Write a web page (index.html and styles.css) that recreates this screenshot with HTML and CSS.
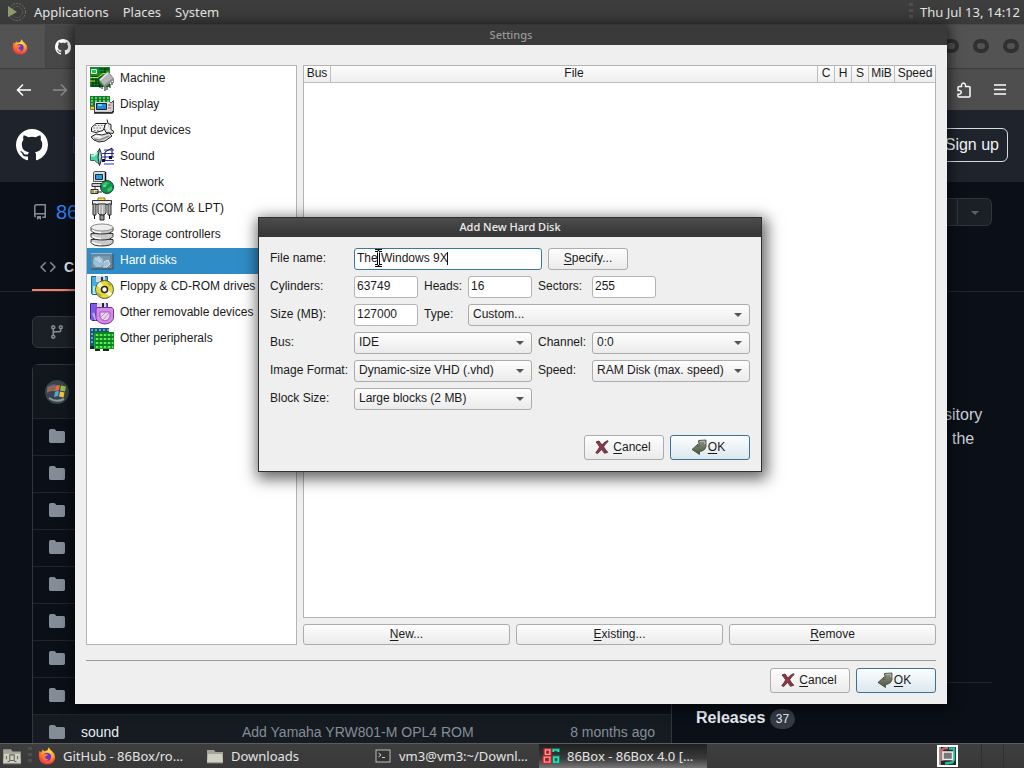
FILE: index.html
```html
<!DOCTYPE html>
<html lang="en">
<head>
<meta charset="utf-8">
<title>86Box Settings</title>
<link rel="stylesheet" href="styles.css">
</head>
<body>
<svg class="defs" aria-hidden="true">
  <defs>
    <linearGradient id="leaf" x1="0" y1="0" x2="0" y2="1"><stop offset="0" stop-color="#8f967e"/><stop offset="1" stop-color="#4d5543"/></linearGradient>
    <radialGradient id="flame" cx=".6" cy=".25" r=".85"><stop offset="0" stop-color="#ffe14a"/><stop offset=".45" stop-color="#ff9a2a"/><stop offset=".8" stop-color="#f4403c"/><stop offset="1" stop-color="#d8206c"/></radialGradient>
    <symbol id="firefox" viewBox="0 0 16 16">
      <path d="M1.200 3.400 2.800 4.600 4.200 2.200 5.600 3.800Q7 3 8.200 3L9.600.3Q11 3 13 4.300 15.600 6.500 15.200 9.800 14.100 15.500 8.200 15.600 1.700 15.200.8 9 .6 6 1.200 3.400z" fill="url(#flame)"/>
      <circle cx="8" cy="8.700" r="3.700" fill="#6a35c8"/>
      <path d="M4.200 6.500Q6 5.400 8 6.300 9.200 7 8.200 7.800 6.500 8 6.300 9.300 7 11.200 9.500 10.800 8 13 5.500 11.800 3.200 9.500 4.200 6.500z" fill="#ff7a2d"/>
    </symbol>
    <symbol id="octocat" viewBox="0 0 16 16"><path fill="#fff" d="M8 0C3.58 0 0 3.58 0 8c0 3.54 2.29 6.53 5.47 7.59.4.07.55-.17.55-.38 0-.19-.01-.82-.01-1.49-2.01.37-2.53-.49-2.69-.94-.09-.23-.48-.94-.82-1.13-.28-.15-.68-.52-.01-.53.63-.01 1.08.58 1.23.82.72 1.21 1.87.87 2.33.66.07-.52.28-.87.51-1.07-1.78-.2-3.64-.89-3.64-3.95 0-.87.31-1.59.82-2.15-.08-.2-.36-1.02.08-2.12 0 0 .67-.21 2.2.82.64-.18 1.32-.27 2-.27.68 0 1.36.09 2 .27 1.53-1.04 2.2-.82 2.2-.82.44 1.1.16 1.92.08 2.12.51.56.82 1.27.82 2.15 0 3.07-1.87 3.75-3.65 3.95.29.25.54.73.54 1.48 0 1.07-.01 1.93-.01 2.2 0 .21.15.46.55.38A8.013 8.013 0 0016 8c0-4.42-3.58-8-8-8z"/></symbol>
    <symbol id="folder" viewBox="0 0 16 16"><path fill="#848d97" d="M1.750 1A1.750 1.750 0 0 0 0 2.750v10.500C0 14.216.784 15 1.750 15h12.500A1.750 1.750 0 0 0 16 13.250v-8.500A1.750 1.750 0 0 0 14.250 3H7.500a.25.25 0 0 1-.2-.1l-.9-1.200C6.070 1.260 5.550 1 5 1H1.750Z"/></symbol>
    <symbol id="cross" viewBox="0 0 14 14"><path d="M1 2 4 1Q5.500 3 6.800 5 9 2.200 12.500.6L13 1.600Q10.300 4 8.600 6.800 10.500 10 12.800 12.300L9.500 13.300Q8 11.500 6.700 9.300 4.500 12 2.500 13.500L.8 12.700Q3 9.800 4.700 6.900 3 4.300 1 2z" fill="#8d3a48" stroke="#4c2028" stroke-width=".8"/></symbol>
    <symbol id="enter" viewBox="0 0 16 16"><path d="M7.500 1.500 15 1v6.500q-1 4.500-6.500 5V15.500L1 10.500 7 5v3q1-.5 1-2z" fill="url(#leaf)" stroke="#3e4437" stroke-width=".8"/><path d="M8.800 2.600 13.800 2.200v3" stroke="#b4b9a6" fill="none"/></symbol>
    <symbol id="dir" viewBox="0 0 18 18"><path d="M1 3h7l1.500 2H17v11H1z" fill="#a4a595"/><path d="M2 7h14l1 9H1z" fill="#cfd0c2"/><path d="M1 16h16" stroke="#77786b"/></symbol>
    <symbol id="box86" viewBox="0 0 16 16"><path d="M3 2.500h4v4H3zM2 9h5v4.500H2z" fill="none" stroke="#b52430" stroke-width="3.400"/><path d="M3 2.500h4v4H3zM2 9h5v4.500H2z" fill="none" stroke="#ff9b92" stroke-width="1.200"/><path d="M14.500 4.500v-2H10v2M10.500 9h4v4.500h-4z" fill="none" stroke="#0d7f63" stroke-width="3"/><path d="M14.500 4.500v-2H10v2M10.500 9h4v4.500h-4z" fill="none" stroke="#45e6b8" stroke-width="1.200"/></symbol>
  </defs>
</svg>

<div class="desktop">
  <header class="panel panel-top">
    <nav class="menus">
      <button class="menu-button"><svg class="launcher" viewBox="0 0 20 20"><circle cx="10" cy="10" r="8.500" fill="none" stroke="#6f775c" stroke-dasharray="2 1"/><circle cx="10" cy="10" r="5.500" fill="none" stroke="#59604c" stroke-dasharray="3 1"/><path d="M1 4l9 6-9 5z" fill="#8e9b6c"/></svg>Applications</button>
      <button class="menu-button">Places</button>
      <button class="menu-button">System</button>
    </nav>
    <div class="clock"><span class="grip"></span><time>Thu Jul 13, 14:12</time></div>
  </header>

  <main class="browser">
    <div class="tabstrip">
      <button class="pinned" aria-label="Firefox"><svg class="i16"><use href="#firefox"/></svg></button>
      <button class="tab" aria-label="GitHub"><svg class="i16"><use href="#octocat"/></svg></button>
      <div class="window-dots"><span></span><span></span><span></span></div>
    </div>
    <div class="toolbar">
      <div class="nav-buttons">
        <button aria-label="Back"><svg class="i16" viewBox="0 0 16 16"><path d="M15 8H1.500M7 2.500 1.500 8 7 13.500" fill="none" stroke="#fff" stroke-width="1.500"/></svg></button>
        <button aria-label="Forward"><svg class="i16" viewBox="0 0 16 16"><path d="M1 8h13.500M9 2.500 14.500 8 9 13.500" fill="none" stroke="#8d8d8d" stroke-width="1.500"/></svg></button>
      </div>
      <div class="tool-buttons">
        <button aria-label="Extensions"><svg class="i16" viewBox="0 0 16 16"><path d="M2 8.500V5.500Q2 4.500 3 4.500H5.500V3Q5.800 1 7.500 1T9.500 3V4.500H13q1 0 1 1V14q0 1-1 1H3q-1 0-1-1V12.200H3.500Q5.300 12 5.300 10.300T3.500 8.500z" fill="none" stroke="#fff" stroke-width="1.500"/></svg></button>
        <button aria-label="Menu"><svg class="i16" viewBox="0 0 16 16"><path d="M2 3h12M2 7.500h12M2 12h12" stroke="#fff" stroke-width="1.500"/></svg></button>
      </div>
    </div>
    <div class="gh-header">
      <a class="gh-logo" href="#" aria-label="GitHub"><svg class="i32"><use href="#octocat"/></svg></a>
      <span class="gh-search"></span>
      <a class="signup" href="#">Sign up</a>
    </div>
    <div class="repo">
      <div class="repo-head">
        <svg class="i16" viewBox="0 0 16 16"><path fill="#848d97" d="M2 2.500A2.500 2.500 0 0 1 4.500 0h8.750a.75.75 0 0 1 .75.75v12.500a.75.75 0 0 1-.75.75h-2.500a.75.75 0 0 1 0-1.500h1.750v-2h-8a1 1 0 0 0-.714 1.700.75.75 0 1 1-1.072 1.050A2.495 2.495 0 0 1 2 11.500Zm10.500-1h-8a1 1 0 0 0-1 1v6.708A2.486 2.486 0 0 1 4.500 9h8ZM5 12.250a.25.25 0 0 1 .25-.25h3.500a.25.25 0 0 1 .25.25v3.250a.25.25 0 0 1-.4.2l-1.450-1.087a.249.249 0 0 0-.3 0L5.400 15.700a.25.25 0 0 1-.4-.2Z"/></svg>
        <a class="owner" href="#">86</a>
        <button class="star" aria-label="Lists"><span class="tri"></span></button>
      </div>
      <nav class="repo-nav"><a class="repo-tab" href="#"><svg class="i16" viewBox="0 0 16 16"><path fill="#848d97" d="m11.280 3.220 4.250 4.250a.75.75 0 0 1 0 1.060l-4.250 4.250a.749.749 0 0 1-1.275-.326.749.749 0 0 1 .215-.734L13.940 8l-3.720-3.720a.749.749 0 0 1 .326-1.275.749.749 0 0 1 .734.215Zm-6.560 0a.751.751 0 0 1 1.042.018.751.751 0 0 1 .018 1.042L2.060 8l3.720 3.720a.749.749 0 0 1-.326 1.275.749.749 0 0 1-.734-.215L.47 8.530a.75.75 0 0 1 0-1.060Z"/></svg>C</a></nav>
      <div class="repo-body">
        <section class="code">
          <button class="branch" aria-label="Branch"><svg class="i16" viewBox="0 0 16 16"><path fill="#848d97" d="M9.500 3.250a2.250 2.250 0 1 1 3 2.122V6A2.500 2.500 0 0 1 10 8.500H6a1 1 0 0 0-1 1v1.128a2.251 2.251 0 1 1-1.500 0V5.372a2.250 2.250 0 1 1 1.500 0v1.836A2.493 2.493 0 0 1 6 7h4a1 1 0 0 0 1-1v-.628A2.250 2.250 0 0 1 9.500 3.250Zm-6 0a.75.75 0 1 0 1.500 0 .75.75 0 0 0-1.500 0Zm8.250-.75a.75.75 0 1 0 0 1.500.75.75 0 0 0 0-1.500ZM4.250 12a.75.75 0 1 0 0 1.500.75.75 0 0 0 0-1.500Z"/></svg></button>
          <div class="files">
            <div class="commit"><svg class="i24" viewBox="0 0 24 24"><circle cx="12" cy="12" r="12" fill="#39434b"/><path d="M2 7q7-5 12-1l-1 7Q8 9 2 13z" fill="#536879"/><path d="M3 8.500q4-2 8-1M2 11q5-2 8-1" stroke="#bd6141" stroke-width="1.500" fill="none"/><path d="m11 6 4-1-1 5-4 1z" fill="#f06a36"/><path d="m16 5.500 5 1-1 5-5-1z" fill="#8fc34a"/><path d="m10 12 4-1-1 5-4 1z" fill="#48a8e8"/><path d="m15 11.500 4.500 1-1 5-4.500-1z" fill="#f5c73a"/><path d="M4 18q7 5 15 1" stroke="#8b989e" stroke-width="2" fill="none"/></svg></div>
            <table class="file-table">
              <tbody>
              <tr><td><svg class="i16"><use href="#folder"/></svg></td><td></td><td></td><td></td></tr>
              <tr><td><svg class="i16"><use href="#folder"/></svg></td><td></td><td></td><td></td></tr>
              <tr><td><svg class="i16"><use href="#folder"/></svg></td><td></td><td></td><td></td></tr>
              <tr><td><svg class="i16"><use href="#folder"/></svg></td><td></td><td></td><td></td></tr>
              <tr><td><svg class="i16"><use href="#folder"/></svg></td><td></td><td></td><td></td></tr>
              <tr><td><svg class="i16"><use href="#folder"/></svg></td><td></td><td></td><td></td></tr>
              <tr><td><svg class="i16"><use href="#folder"/></svg></td><td></td><td></td><td></td></tr>
              <tr><td><svg class="i16"><use href="#folder"/></svg></td><td></td><td></td><td></td></tr>
              <tr class="hover"><td><svg class="i16"><use href="#folder"/></svg></td><td><a href="#">sound</a></td><td>Add Yamaha YRW801-M OPL4 ROM</td><td>8 months ago</td></tr>
              </tbody>
            </table>
          </div>
        </section>
        <aside class="about">
          <p class="description"><span>sitory</span><span class="indent">the</span></p>
          <h2 class="releases">Releases <span class="count">37</span></h2>
        </aside>
      </div>
    </div>
  </main>

  <footer class="panel panel-bottom">
    <button class="show-files" aria-label="Files"><svg class="i20" viewBox="0 0 18 18"><use href="#dir"/><path d="M7 8h4v5H7zM4 9v3M14 9v3M5 14h2M11 14h2" fill="none" stroke="#66685c"/></svg></button>
    <span class="grip"></span>
    <div class="tasks">
      <button class="task"><svg class="i18"><use href="#firefox"/></svg><span>GitHub - 86Box/ro…</span></button>
      <button class="task"><svg class="i18"><use href="#dir"/></svg><span>Downloads</span></button>
      <button class="task"><svg class="i18" viewBox="0 0 18 18"><rect x="2" y="3" width="14" height="12" fill="#343434" stroke="#bcbcbc"/><path d="m4.500 6 2.500 2-2.500 2M8 10.500h3" fill="none" stroke="#d2d2d2"/></svg><span>vm3@vm3:~/Downl…</span></button>
      <button class="task active"><svg class="i18"><use href="#box86"/></svg><span>86Box - 86Box 4.0 […</span></button>
    </div>
    <div class="tray"><svg class="tray-icon" viewBox="0 0 21 22"><path d="M1 1h19v20H1z" fill="#26282c" stroke="#fff" stroke-width="2"/><path d="M3 2v18" stroke="#fff"/><path d="M5 16V5q1-2 6-2" fill="none" stroke="#c9626a" stroke-width="2.500"/><path d="M12 3.500h5v11l-2 3-7 1" fill="none" stroke="#24bc98" stroke-width="2.500"/><path d="M6 7h9.500v7.500H6z" fill="#777" stroke="#eee" stroke-width="1.500"/></svg></div>
    <span class="workspace"></span>
  </footer>

  <section class="window settings" aria-label="Settings">
    <h1 class="titlebar inactive">Settings</h1>
    <div class="settings-content">
      <div class="panes">
        <ul class="categories">
          <li><button><svg class="i24" viewBox="0 0 24 24"><path d="M0 0h20v20H0z" fill="#128a2c"/><path d="M1 10h12M1 13h9M1 16h8M1 19h9M3 9v11M6 9v11M9 9v11M9 2h10M10 5h5M15 1v5" stroke="#05300d" fill="none"/><path d="M1.500 2.500h5v4h-5z" fill="#39b552" stroke="#d9f4dc"/><path d="M0 10.500h8l5-4h7M0 14h5" stroke="#d9de2a" fill="none"/><path d="M10 17v4M12 18v4M15 20v4M17 19v4M20 17v4M22 15v3M24 13v3" stroke="#111"/><path d="M18 4.500 24 12l-9 8-6-7z" fill="#b4b4b4" stroke="#777" stroke-width=".7"/><path d="m10 13 8-7" stroke="#e8e8e8" stroke-width="1.500"/><path d="m14 19 9-7" stroke="#888" stroke-width="1.500"/></svg>Machine</button></li>
          <li><button><svg class="i24" viewBox="0 0 24 24"><path d="M0 3h20v12H0z" fill="#137b2c"/><path d="M1 5h19M1 8h19M1 11h5" stroke="#7fe47f" stroke-width="1.500" stroke-dasharray="2 2"/><path d="M.5 13.500h4v3h-4z" stroke="#837b1e" fill="#d9d04a"/><path d="M4.500 9.500h17l2-2v10l-2 2h-17z" fill="#c8c8c8" stroke="#444"/><path d="M5 9h15v9H5z" fill="#dedede"/><path d="M6.500 10.500h10v6h-10z" fill="#238bd8" stroke="#123"/><path d="M8 12h4" stroke="#73cdf8" stroke-width="2"/><path d="M18 12h2.500M18 15h2.500" stroke="#a33"/><path d="M4 20h18l2-2" stroke="#222" stroke-width="1.500" fill="none"/></svg>Display</button></li>
          <li><button><svg class="i24" viewBox="0 0 24 24"><path d="M1.500 8.500 6 4.500h11l-4 7-7 2-4.500-1z" fill="#efefef" stroke="#222"/><path d="M5 6.500h10M3.500 9h9M4 11.500h6" stroke="#777" stroke-dasharray="1.500 1.500"/><path d="m17 .5 1 4 3 1v5l3 2-1 2-7-1-2-4 1-4 2-1" fill="#ddd" stroke="#222"/><path d="M17 5v4l3 3" stroke="#fff" stroke-width="1.500" fill="none"/><path d="M1 18l5-3 6 1 7-2 3 3-7 5-6 1-5-2z" fill="#dedede" stroke="#222"/><path d="m4 20 6 1 9-4" fill="none" stroke="#888" stroke-width="1.500"/><path d="m5 17 6 1" stroke="#fff" stroke-width="1.500"/></svg>Input devices</button></li>
          <li><button><svg class="i24" viewBox="0 0 24 24"><path d="M.5 9.500h4l5-5v15l-5-4h-4z" fill="#4ecfa5" stroke="#2b6f5c"/><path d="M1 10.500h3l3-3" stroke="#b6fff0" stroke-width="2" fill="none"/><path d="M9.500 3.500q4 8 0 17-3-8 0-17z" fill="#b6ddd4" stroke="#222"/><path d="M14 5h10M12 8.500h12M12 12h12M12 15.500h12M14 19h10" stroke="#2c2bc0"/><path d="M15 15V7l7-4v9" fill="none" stroke="#10103c"/><path d="M12 14h3v3h-3zM19 11h3v3h-3z" fill="#0c0c54"/></svg>Sound</button></li>
          <li><button><svg class="i24" viewBox="0 0 24 24"><path d="M3.500 1.500 5 .5h10l.5 1v9h-12z" fill="#dedede" stroke="#555"/><path d="M15.500 1v10l-2 2" stroke="#111" fill="none" stroke-width="1.500"/><path d="M5.500 3.500h7v5h-7z" fill="#2f9ddd" stroke="#142d4c"/><path d="M2 12.500h11v3H2z" fill="#cfcfcf" stroke="#333"/><path d="M5 16v3M1 18.500h7v4H1z" fill="#ddd" stroke="#333"/><path d="M3 19v3M6 20v2" stroke="#b5a324" stroke-width="2"/><path d="M7 21h5" stroke="#222"/><circle cx="17" cy="16" r="6.500" fill="#14905a" stroke="#0a3f25"/><path d="m12 13 4-2 3 1-4 4zM17 18l5-3v4l-4 2z" fill="#35c45c"/><path d="M13 15h3" stroke="#9dffc0"/></svg>Network</button></li>
          <li><button><svg class="i24" viewBox="0 0 24 24"><path d="M8 3V1h7v2" fill="#efe253" stroke="#8c8120"/><path d="M2.500 3.500h19v4h-19z" fill="#d4d4d4" stroke="#333"/><path d="M3 7h3v11H3zM18 7h3v11h-3z" fill="#aaa" stroke="#333"/><path d="M8 7h8v9l-2 2h-4l-2-2z" fill="#dedede" stroke="#222"/><path d="M11 8v9M14 8v9" stroke="#888"/><path d="M10 18h4v5h-4z" fill="#999" stroke="#222"/><path d="M4.500 18v4M19.500 18v4" stroke="#111"/><path d="M3 5h17" stroke="#fff"/></svg>Ports (COM &amp; LPT)</button></li>
          <li><button><svg class="i24" viewBox="0 0 24 24"><g fill="#c9c9c9" stroke="#333"><path d="M1 16.500v3q2 3.500 11 3.500t11-3.500v-3z"/><path d="M1 10.500v3q2 3.500 11 3.500t11-3.500v-3z"/><path d="M1 4.500v3Q3 11 12 11t11-3.500v-3z"/><ellipse cx="12" cy="4.500" rx="11" ry="3.500" fill="#eee" stroke="#888"/></g><path d="M2 7q3 2.500 9 2.500M2 13q3 2.500 9 2.500M2 19q3 2.500 9 2.500" fill="none" stroke="#fff" stroke-width="1.500"/></svg>Storage controllers</button></li>
          <li><button class="selected"><svg class="i24" viewBox="0 0 24 24"><path d="M1 4h21l1 1v15H1z" fill="#68879a"/><path d="M1 4.500h21" stroke="#9fb8c6"/><path d="M3 7h17v11H3z" fill="#7997aa"/><path d="m4 9 5-2 4 3 1 5-3 3H6l-3-4z" fill="#9cc0d5"/><path d="m5 9 5 4M8 8l3 5M14 13l4-2 2 4-3 3h-4" fill="#a5bfce" stroke="#d3e5ef"/><path d="M1 20h22V5" stroke="#334b5c" fill="none"/></svg>Hard disks</button></li>
          <li><button><svg class="i24" viewBox="0 0 24 24"><path d="M1.500 1.500h16v18h-15l-1-1z" fill="#45aee0" stroke="#1d5f8b"/><path d="M6 1h9v6H6z" fill="#cfd8e0"/><path d="M11 2h2v4h-2z" fill="#333"/><path d="M3 11h5v8H3z" fill="#a6eff6"/><circle cx="14.500" cy="14.500" r="9" fill="#e3da35" stroke="#555"/><path d="m8.500 8.500 5 5M16 16l5 4" stroke="#fffbd0" stroke-width="4"/><path d="m18 8 3 3M7 18l4 3" stroke="#b7ae22" stroke-width="2"/><circle cx="14.500" cy="14.500" r="3" fill="#fff" stroke="#222" stroke-width="1.500"/></svg>Floppy &amp; CD-ROM drives</button></li>
          <li><button><svg class="i24" viewBox="0 0 24 24"><path d="M.5 2.500h17v17H2l-1.500-1.500z" fill="#7b5be6" stroke="#3a269a"/><path d="M7 2h9v5H7z" fill="#dcd8ea"/><path d="M12 2h2v4h-2z" fill="#222"/><path d="m3 12 3 7" stroke="#beb0ff" stroke-width="2"/><path d="M7 6.500h15l1.500 2v9q-2 5-8.500 5.500-7-.5-9-5.500V8z" fill="#d58bed" stroke="#7a2f93"/><path d="M10 11h10v5q-2 4-5 4t-5-4z" fill="#ead3ee" stroke="#9a58aa"/><path d="m11 16 5-5M13 19l6-7" stroke="#b392bb"/></svg>Other removable devices</button></li>
          <li><button><svg class="i24" viewBox="0 0 24 24"><path d="M0 1h19v18H0z" fill="#155a78"/><path d="M1 3h18M1 7h4M1 11h4M1 15h4" stroke="#7cc0cc" stroke-dasharray="2 2" stroke-width="1.500"/><path d="M4 5h20v17H4z" fill="#18a42c"/><path d="M6 8h17M6 12h17M6 16h17M6 20h17" stroke="#5ef04e" stroke-dasharray="2 2" stroke-width="2"/><path d="M4 6h20M5 10h19M5 14h19M5 18h19" stroke="#0b5f16"/><path d="M0 19h4v3H0zM5 22h5v2H5zM13 22h6v2h-6z" fill="#172a17"/></svg>Other peripherals</button></li>
        </ul>
        <div class="disks">
          <div class="disk-list">
            <table class="disk-table"><colgroup><col class="c-bus"><col><col class="c-num"><col class="c-num"><col class="c-num"><col class="c-mib"><col class="c-speed"></colgroup>
              <thead><tr><th>Bus</th><th>File</th><th>C</th><th>H</th><th>S</th><th>MiB</th><th>Speed</th></tr></thead>
            </table>
          </div>
          <div class="disk-actions"><button class="btn"><u>N</u>ew...</button><button class="btn"><u>E</u>xisting...</button><button class="btn"><u>R</u>emove</button></div>
        </div>
      </div>
      <div class="actions ruled">
        <button class="btn big"><svg class="i14"><use href="#cross"/></svg><span><u>C</u>ancel</span></button>
        <button class="btn big default"><svg class="i16"><use href="#enter"/></svg><span><u>O</u>K</span></button>
      </div>
    </div>
  </section>

  <section class="window dialog" role="dialog" aria-label="Add New Hard Disk">
    <h1 class="titlebar">Add New Hard Disk</h1>
    <form class="dialog-content">
      <div class="fields">
        <label for="file">File name:</label>
        <div class="file-row"><span class="file-field"><input id="file" class="focused" type="text" value="The Windows 9X"><span class="caret"></span><svg class="pointer" viewBox="0 0 9 18"><path d="M1 1.500h2.500l1 1 1-1H8M4.500 2v14M1 16.500h2.500l1-1 1 1H8" fill="none" stroke="#000" stroke-width="3"/><path d="M1 1.500h2.500l1 1 1-1H8M4.500 2v14M1 16.500h2.500l1-1 1 1H8" fill="none" stroke="#fff"/></svg></span><button type="button" class="btn specify"><u>S</u>pecify...</button></div>
        <label for="cyl">Cylinders:</label><input id="cyl" type="text" value="63749">
        <label for="heads">Heads:</label><input id="heads" type="text" value="16">
        <label for="sectors">Sectors:</label><input id="sectors" class="short" type="text" value="255">
        <label for="size">Size (MB):</label><input id="size" type="text" value="127000">
        <label for="type">Type:</label><span class="combo span-rest"><select id="type"><option>Custom...</option></select></span>
        <label for="bus">Bus:</label><span class="combo span-three"><select id="bus"><option>IDE</option></select></span>
        <label for="channel">Channel:</label><span class="combo"><select id="channel"><option>0:0</option></select></span>
        <label for="format">Image Format:</label><span class="combo span-three"><select id="format"><option>Dynamic-size VHD (.vhd)</option></select></span>
        <label for="speed">Speed:</label><span class="combo"><select id="speed"><option>RAM Disk (max. speed)</option></select></span>
        <label for="block">Block Size:</label><span class="combo span-three"><select id="block"><option>Large blocks (2 MB)</option></select></span>
      </div>
      <div class="actions">
        <button type="button" class="btn big"><svg class="i14"><use href="#cross"/></svg><span><u>C</u>ancel</span></button>
        <button type="button" class="btn big default"><svg class="i16"><use href="#enter"/></svg><span><u>O</u>K</span></button>
      </div>
    </form>
  </section>
</div>
</body>
</html>
```
FILE: styles.css
```css
* { box-sizing: border-box; }
body { margin: 0; font: 12px/16px "Liberation Sans", Arial, sans-serif; color: #1a1a1a; background: #0b0f17; }
button, input, select { font: inherit; color: inherit; margin: 0; }
button { border: 0; padding: 0; background: none; }
a { color: inherit; text-decoration: none; }
u { text-underline-offset: 2px; }
svg { flex: none; display: block; }
.defs { position: absolute; width: 0; height: 0; }
.i14 { width: 14px; height: 14px; }
.i16 { width: 16px; height: 16px; }
.i18 { width: 18px; height: 18px; }
.i20 { width: 20px; height: 20px; }
.i24 { width: 24px; height: 24px; }
.i32 { width: 32px; height: 32px; }

.desktop { position: relative; height: 100vh; display: flex; flex-direction: column; overflow: hidden; }

/* Desktop panels */
.panel { flex: none; height: 25px; display: flex; align-items: center; color: #e4e4e4; font: 13px/20px "Noto Sans", sans-serif; background: linear-gradient(#3e3e3e, #393939); }
.panel-top { justify-content: space-between; padding: 0 4px 0 7px; border-bottom: 1px solid #4b4b4b; }
.menus { display: flex; gap: 14px; }
.menu-button { display: flex; align-items: center; gap: 7px; }
.launcher { width: 20px; height: 20px; }
.clock { display: flex; align-items: center; gap: 7px; }
.grip { width: 4px; height: 18px; background: repeating-linear-gradient(#4e4e4e 0 3px, #3b3b3b 3px 6px); }
.panel-bottom { border-top: 1px solid #5c5c5c; }
.show-files { margin: 0 6px 0 2px; }
.tasks { display: flex; width: 672px; margin-left: 3px; }
.task { flex: 1; min-width: 0; height: 24px; display: flex; align-items: center; gap: 7px; padding: 0 3px; white-space: nowrap; }
.task.active { background: linear-gradient(#1f1f1f, #3a3a3a 60%, #777); }
.tray { margin-left: auto; }
.tray-icon { width: 21px; height: 22px; }
.workspace { width: 23px; height: 24px; margin: 0 20px 0 23px; border: solid #303030; border-width: 0 1px; }

/* Browser */
.browser { flex: 1; min-height: 0; display: flex; flex-direction: column; background: #0b0f17; }
.tabstrip { flex: none; height: 44px; display: flex; align-items: stretch; background: #535353; border-bottom: 1px solid #3b3b3b; }
.pinned { width: 46px; padding-left: 12px; border-right: 1px solid #454545; }
.tab { width: 200px; padding-left: 9px; background: #484848; }
.window-dots { margin-left: auto; display: flex; align-items: center; gap: 14px; padding: 0 5px 2px 0; }
.window-dots span { width: 16px; height: 14px; border: 4px solid #303030; border-radius: 8px; background: #525252; }
.toolbar { flex: none; height: 41px; display: flex; align-items: center; justify-content: space-between; padding: 0 16px; background: #4e4e4e; }
.nav-buttons, .tool-buttons { display: flex; gap: 20px; }
.gh-header { flex: none; height: 72px; display: flex; align-items: center; padding: 0 16px 3px; background: #1f232c; }
.gh-logo { margin-right: 25px; }
.gh-search { width: 400px; height: 16px; border: 1px solid #1f3f78; }
.signup { margin-left: auto; padding: 4px 8px; border: 1px solid #d8dbe0; border-radius: 6px; color: #f0f3f6; font-size: 16px; line-height: 24px; }
.repo { flex: 1; min-height: 0; overflow: hidden; }
.repo-head { display: flex; align-items: center; gap: 8px; padding: 16px 32px 0; }
.owner { color: #2f81f7; font-size: 20px; line-height: 28px; }
.star { margin-left: auto; width: 146px; height: 28px; display: flex; justify-content: flex-end; border: 1px solid #30363d; border-radius: 6px; background: #1b2027; }
.star .tri { display: flex; align-items: center; justify-content: center; width: 34px; padding-top: 2px; border-left: 1px solid #30363d; }
.star .tri::after { content: ""; border: 4px solid transparent; border-top-color: #59616b; border-bottom: 0; }
.repo-nav { margin-top: 16px; height: 50px; display: flex; padding: 0 32px; border-bottom: 1px solid #21262d; }
.repo-tab { width: 110px; display: flex; align-items: center; gap: 8px; padding: 3px 8px 0; color: #e6edf3; font-size: 14px; font-weight: bold; border-bottom: 2px solid #f78166; }
.repo-body { display: flex; gap: 24px; padding: 24px 32px 0; }
.code { flex: 1; display: flex; flex-direction: column; gap: 16px; }
.branch { width: 120px; height: 32px; padding-left: 16px; border: 1px solid #30363d; border-radius: 6px; background: #1b2027; }
.files { border: 1px solid #30363d; border-radius: 6px; }
.commit { padding: 15px 12px 14px; background: #12171e; }
.file-table { width: 100%; border-collapse: separate; border-spacing: 0; table-layout: fixed; color: #848d97; font-size: 14px; line-height: 20px; }
.file-table td { height: 37px; padding: 0 0 2px; border-top: 1px solid #21262d; white-space: nowrap; }
.file-table td:first-child { width: 48px; padding-left: 16px; }
.file-table td:nth-child(2) { width: 161px; color: #e6edf3; }
.file-table td:nth-child(4) { width: 120px; padding-right: 16px; text-align: right; }
.file-table .hover { background: #161b22; }
.about { flex: none; width: 296px; padding-top: 87px; color: #c9d1d9; font-size: 16px; line-height: 24px; }
.description { height: 279px; margin: 0; padding-left: 248px; }
.description span { display: block; }
.description .indent { padding-left: 8px; }
.releases { margin: 0; padding-top: 23px; border-top: 1px solid #21262d; font-size: 16px; line-height: 24px; color: #e6edf3; }
.count { display: inline-block; padding: 0 6px; border-radius: 10px; background: #343b44; font-size: 12px; line-height: 20px; font-weight: normal; }

/* Windows */
.window { position: absolute; display: flex; flex-direction: column; background: #efefef; }
.titlebar { flex: none; height: 20px; margin: 0; text-align: center; color: #eee; font: 500 11px/19px "Noto Sans", sans-serif; background: linear-gradient(#4c4c4c, #343434); }
.titlebar.inactive { color: #989898; background: #3a3a3a; }
.settings { inset: 25px 77px 64px 75px; box-shadow: 0 2px 12px 2px #000000a0; }
.settings-content { flex: 1; min-height: 0; display: flex; flex-direction: column; padding: 20px 11px 11px; }
.panes { flex: 1; min-height: 0; display: flex; gap: 6px; }
.categories { width: 211px; margin: 0; padding: 0; list-style: none; background: #fff; border: 1px solid #b4b4b4; }
.categories button { width: 100%; height: 26px; display: flex; align-items: center; gap: 6px; padding: 0 3px 2px; white-space: nowrap; }
.categories svg { margin-top: 2px; }
.categories .selected { background: #308cc6; color: #fff; }
.disks { flex: 1; display: flex; flex-direction: column; gap: 6px; }
.disk-list { flex: 1; background: #fff; border: 1px solid #b4b4b4; }
.disk-table { width: 100%; border-collapse: separate; border-spacing: 0; table-layout: fixed; }
.disk-table th { height: 17px; padding: 0 0 2px; font-weight: normal; line-height: 14px; background: linear-gradient(#fcfcfc, #eee); border: solid #bdbdbd; border-width: 0 1px 1px 0; }
.disk-table th:last-child { border-right: 0; }
.c-bus { width: 27px; }
.c-num { width: 17px; }
.c-mib { width: 26px; }
.c-speed { width: 40px; }
.disk-actions { display: grid; grid-template-columns: repeat(3, 1fr); gap: 6px; }
.btn { height: 21px; display: flex; align-items: center; justify-content: center; gap: 4px; padding-bottom: 2px; border: 1px solid #acacac; border-radius: 3px; background: linear-gradient(#fdfdfd, #ebebeb); }
.disk-actions .btn, .specify { gap: 0; }
.big { width: 80px; height: 25px; padding: 0 2px 2px 0; }
.default { gap: 1px; padding-right: 4px; border-color: #3d7192; background: linear-gradient(#fcfdfe, #dce8ee); }
.actions { display: flex; justify-content: flex-end; gap: 6px; }
.ruled { margin-top: 15px; padding-top: 8px; border-top: 1px solid #9c9c9c; }
.ruled { padding-top: 7px; }

.dialog { left: 258px; top: 217px; width: 504px; border: 1px solid #303030; box-shadow: 2px 4px 14px 3px #00000099; }
.dialog .titlebar { height: 19px; line-height: 18px; }
.dialog-content { display: flex; flex-direction: column; gap: 25px; padding: 11px; }
.fields { display: grid; grid-template-columns: 78px 64px 38px 64px 48px 1fr; grid-auto-rows: 22px; gap: 6px; }
.fields label { line-height: 20px; white-space: nowrap; }
.fields input { width: 100%; height: 22px; padding: 0 2px 2px; border: 1px solid #b4b4b4; border-radius: 3px; background: #fff; outline: 0; }
.fields .focused { border-color: #39799f; }
.fields .short { width: 64px; }
.file-row { grid-column: 2 / -1; display: flex; gap: 6px; }
.file-field { position: relative; width: 188px; }
.caret { position: absolute; left: 93px; top: 4px; width: 1px; height: 13px; background: #111; }
.pointer { position: absolute; left: 20px; top: 1px; width: 9px; height: 18px; }
.specify { width: 80px; height: 22px; }
.combo { position: relative; }
.combo select { appearance: none; width: 100%; height: 22px; padding: 0 20px 2px 4px; border: 1px solid #acacac; border-radius: 3px; background: linear-gradient(#fdfdfd, #ebebeb); }
.combo::after { content: ""; position: absolute; right: 8px; top: 9px; border: 4px solid transparent; border-top: 4px solid #555; border-bottom: 0; pointer-events: none; }
.span-rest { grid-column: 4 / -1; }
.span-three { grid-column: 2 / span 3; }
```
